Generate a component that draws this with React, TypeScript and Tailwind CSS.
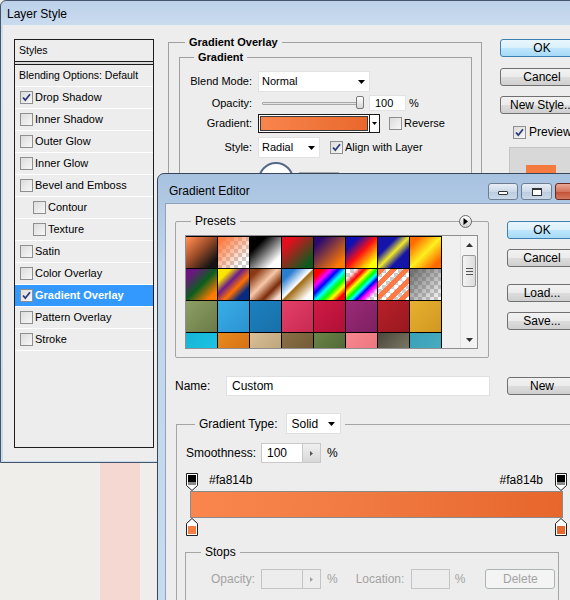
import type { ReactNode } from "react";

type Swatch = { c: string; chk?: boolean };

const SWATCHES: Swatch[] = [
  { c: "bg-[linear-gradient(135deg,#ff8a50_5%,#9a4c28_45%,#141414_85%)]" },
  { c: "bg-[linear-gradient(135deg,#ff7a40_10%,rgba(255,122,64,0)_80%)]", chk: true },
  { c: "bg-[linear-gradient(135deg,#000000_25%,#ffffff_80%)]" },
  { c: "bg-[linear-gradient(135deg,#e0101e_20%,#0e5a1e_85%)]" },
  { c: "bg-[linear-gradient(135deg,#2a0a6e_15%,#ff7a00_85%)]" },
  { c: "bg-[linear-gradient(135deg,#1010b0_20%,#ff1010_50%,#ffff00_85%)]" },
  { c: "bg-[linear-gradient(135deg,#1414a8_30%,#f0e828_50%,#1414a8_70%)]" },
  { c: "bg-[linear-gradient(135deg,#ff6a00_15%,#fff020_50%,#ff6a00_85%)]" },
  { c: "bg-[linear-gradient(135deg,#6c1680_15%,#0a5e1e_50%,#ff7a00_85%)]" },
  { c: "bg-[linear-gradient(135deg,#ffe400_20%,#6a1e8a_40%,#ff7000_60%,#0a2a80_80%)]" },
  { c: "bg-[linear-gradient(135deg,#8a3a14_15%,#f7c8a8_45%,#7a2a08_70%,#f3dccb_90%)]" },
  { c: "bg-[linear-gradient(135deg,#2a7ed0_20%,#ffffff_48%,#a06a10_52%,#ffffff_85%)]" },
  { c: "bg-[linear-gradient(135deg,#ff0000_15%,#ff00ff_28%,#0000ff_40%,#00ffff_52%,#00ff00_64%,#ffff00_76%,#ff0000_88%)]" },
  { c: "bg-[linear-gradient(135deg,transparent_15%,#ff0000_30%,#ffff00_40%,#00ff00_50%,#00ffff_58%,#0000ff_66%,#ff00ff_74%,transparent_88%)]", chk: true },
  { c: "bg-[repeating-linear-gradient(135deg,#ff7a45_0_5px,transparent_5px_9px)]", chk: true },
  { c: "bg-[linear-gradient(135deg,rgba(90,90,90,0.9),rgba(90,90,90,0))]", chk: true },
  { c: "bg-[linear-gradient(135deg,#8da064,#6a7a48)]" },
  { c: "bg-[linear-gradient(135deg,#3aaee6,#2a92d2)]" },
  { c: "bg-[linear-gradient(135deg,#1c80c0,#1870a8)]" },
  { c: "bg-[linear-gradient(135deg,#e4406a,#c82a50)]" },
  { c: "bg-[linear-gradient(135deg,#d01a46,#b01036)]" },
  { c: "bg-[linear-gradient(135deg,#9a2a78,#7e2060)]" },
  { c: "bg-[linear-gradient(135deg,#b82028,#981820)]" },
  { c: "bg-[linear-gradient(135deg,#e8b030,#d09820)]" },
  { c: "bg-[linear-gradient(135deg,#16b4d4,#20c8e8)]" },
  { c: "bg-[linear-gradient(135deg,#e88a20,#d06a10)]" },
  { c: "bg-[linear-gradient(135deg,#d8c098,#b89c70)]" },
  { c: "bg-[linear-gradient(135deg,#8a7048,#6a5430)]" },
  { c: "bg-[linear-gradient(135deg,#6a8448,#4a6030)]" },
  { c: "bg-[linear-gradient(135deg,#f88890,#e87078)]" },
  { c: "bg-[linear-gradient(135deg,#4a483c,#8a8670)]" },
  { c: "bg-[linear-gradient(135deg,#38a0b8,#50b0c0)]" },
];

const STYLES = [
  { label: "Drop Shadow", checked: true },
  { label: "Inner Shadow" },
  { label: "Outer Glow" },
  { label: "Inner Glow" },
  { label: "Bevel and Emboss" },
  { label: "Contour", indent: true },
  { label: "Texture", indent: true },
  { label: "Satin" },
  { label: "Color Overlay" },
  { label: "Gradient Overlay", checked: true, active: true },
  { label: "Pattern Overlay" },
  { label: "Stroke" },
];

const Check = ({ checked = false }: { checked?: boolean }) => (
  <div className="flex h-[13px] w-[13px] shrink-0 items-center justify-center border border-[#8e8f8f] bg-[linear-gradient(135deg,#dcdcdc,#f7f7f7)]">
    {checked && (
      <svg width="11" height="11" viewBox="0 0 11 11">
        <path d="M2 5.5L4.3 8.2L9 2.3" fill="none" stroke="#2c3a78" strokeWidth="1.8" />
      </svg>
    )}
  </div>
);

const Arrow = () => (
  <svg width="7" height="4" viewBox="0 0 7 4">
    <path d="M0 0H7L3.5 4Z" fill="#000" />
  </svg>
);

const Btn = ({ children, def = false, w = "w-[70px]" }: { children: ReactNode; def?: boolean; w?: string }) => (
  <div
    className={`flex h-[18px] items-center justify-center whitespace-nowrap rounded-[3px] border text-[12px] text-black ${w} ${
      def
        ? "border-[#3c7fb1] bg-[linear-gradient(#eaf6fd_0%,#d9f0fc_50%,#bee6fd_51%,#a7d9f5_100%)]"
        : "border-[#707070] bg-[linear-gradient(#f2f2f2_0%,#ebebeb_50%,#dddddd_51%,#cfcfcf_100%)]"
    }`}
  >
    {children}
  </div>
);

const TopStop = () => (
  <svg width="12" height="18" viewBox="0 0 12 18">
    <path d="M0.5 0.5H11.5V12.5L6 17.5L0.5 12.5Z" fill="#fff" stroke="#222" />
    <rect x="2" y="2" width="8" height="7" fill="#000" />
    <rect x="2" y="9" width="8" height="3" fill="#8a8a8a" />
  </svg>
);

const BottomStop = ({ color }: { color: string }) => (
  <svg width="12" height="18" viewBox="0 0 12 18">
    <path d="M6 0.5L11.5 5.5V17.5H0.5V5.5Z" fill="#fff" stroke="#222" />
    <rect x="2" y="8" width="8" height="8" fill={color} />
  </svg>
);

const LayerStyle = () => (
  <div className="absolute left-0 top-0 h-[463px] w-[640px] rounded-t-[6px] border border-[#46566a] bg-[linear-gradient(180deg,#bcd1e9,#d3e2f2_40px,#c8daee)]">
    <div className="flex h-[24px] items-center pl-[6px] pt-[2px] text-[12px] text-black">Layer Style</div>
    <div className="mx-[2px] flex h-[436px] items-start bg-[#ededed] pl-[11px] pt-[14px] text-[10.5px] text-black">
      <div className="h-[409px] w-[140px] shrink-0 border border-[#1e1e1e] bg-[#ededed]">
        <div className="flex h-[22px] items-center border-b border-[#1e1e1e] pl-[4px]">Styles</div>
        <div className="h-[2px] bg-[#dadada]" />
        <div className="flex h-[22px] items-center border-t border-[#1e1e1e] pl-[4px]">Blending Options: Default</div>
        {STYLES.map((s) => (
          <div
            key={s.label}
            className={`flex h-[22px] items-center gap-[2px] border-t border-white ${s.indent ? "pl-[18px]" : "pl-[5px]"} ${
              s.active ? "bg-[#3399ff] font-bold text-white" : ""
            }`}
          >
            <Check checked={s.checked} />
            <span className="text-[11px]">{s.label}</span>
          </div>
        ))}
        <div className="border-t border-white" />
      </div>

      <div className="relative ml-[14px] mt-[3px] h-[300px] w-[314px] shrink-0 border border-[#a0a0a0]">
        <div className="absolute -top-[8px] left-[16px] bg-[#ededed] px-[4px] text-[11px] font-bold leading-[14px]">Gradient Overlay</div>
        <div className="relative ml-[10px] mt-[14px] h-[280px] w-[293px] border border-[#a0a0a0]">
          <div className="absolute -top-[8px] left-[14px] bg-[#ededed] px-[4px] text-[11px] font-bold leading-[14px]">Gradient</div>

          <div className="mt-[13px] flex h-[21px] items-center">
            <div className="w-[72px] text-right text-[11px]">Blend Mode:</div>
            <div className="ml-[6px] flex h-[21px] w-[112px] items-center justify-between border border-[#e2e2e2] bg-white pl-[3px] pr-[4px] text-[11px]">
              <span>Normal</span>
              <Arrow />
            </div>
          </div>

          <div className="mt-[3px] flex h-[16px] items-center">
            <div className="w-[72px] text-right text-[11px]">Opacity:</div>
            <div className="relative ml-[10px] flex h-[16px] w-[102px] items-center">
              <div className="h-[3px] w-[98px] rounded-[1px] border border-[#a8a8a8] bg-[#e4e4e4]" />
              <div className="absolute left-[94px] top-[1px] h-[13px] w-[8px] rounded-[2px] border border-[#7a7a7a] bg-[linear-gradient(#ffffff,#d6d6d6)]" />
            </div>
            <div className="ml-[5px] flex h-[16px] w-[37px] items-center border border-[#e2e2e2] bg-white pl-[5px] text-[11px]">100</div>
            <div className="ml-[3px] text-[11px]">%</div>
          </div>

          <div className="mt-[3px] flex h-[19px] items-center">
            <div className="w-[72px] text-right text-[11px]">Gradient:</div>
            <div className="ml-[6px] flex h-[19px] w-[122px] border border-[#1a1a1a] bg-white">
              <div className="m-px flex-1 border border-[#3a3a3a] bg-[linear-gradient(90deg,#f9854d,#e8682c)]" />
              <div className="flex w-[10px] items-center justify-center border-l border-[#1a1a1a]">
                <svg width="5" height="3" viewBox="0 0 5 3">
                  <path d="M0 0H5L2.5 3Z" fill="#000" />
                </svg>
              </div>
            </div>
            <div className="ml-[9px]">
              <Check />
            </div>
            <div className="ml-[2px] text-[11px]">Reverse</div>
          </div>

          <div className="mt-[4px] flex h-[21px] items-center">
            <div className="w-[72px] text-right text-[11px]">Style:</div>
            <div className="ml-[6px] flex h-[21px] w-[62px] items-center justify-between border border-[#e2e2e2] bg-white pl-[3px] pr-[4px] text-[11px]">
              <span>Radial</span>
              <Arrow />
            </div>
            <div className="ml-[10px]">
              <Check checked />
            </div>
            <div className="ml-[2px] text-[11px]">Align with Layer</div>
          </div>

          <div className="ml-[78px] mt-[4px] flex items-start">
            <div className="h-[36px] w-[36px] rounded-full border-2 border-[#56698a] bg-white" />
            <div className="ml-[5px] mt-[10px] h-[20px] w-[40px] border border-[#aaaaaa] bg-white" />
          </div>
        </div>
      </div>

      <div className="ml-[18px] flex w-[84px] shrink-0 flex-col">
        <Btn def w="w-[84px]">OK</Btn>
        <div className="mt-[11px]">
          <Btn w="w-[84px]">Cancel</Btn>
        </div>
        <div className="mt-[10px]">
          <Btn w="w-[84px]">New Style...</Btn>
        </div>
        <div className="ml-[13px] mt-[9px] flex items-center gap-[3px]">
          <Check checked />
          <span className="whitespace-nowrap text-[12px]">Preview</span>
        </div>
        <div className="ml-[9px] mt-[6px] h-[60px] w-[80px] border border-[#c4c4c4] bg-[#d8d8d8] pl-[16px] pt-[17px]">
          <div className="h-[30px] w-[30px] bg-[#f47a3f]" />
        </div>
      </div>
    </div>
  </div>
);

const GradientEditor = () => (
  <div className="absolute left-[157px] top-[173px] h-[440px] w-[450px] rounded-t-[7px] border border-[#37475b] bg-[linear-gradient(180deg,#a7c2e0,#c2d6ec_90px,#c8dbef)]">
    <div className="flex h-[29px] items-start">
      <div className="pl-[11px] pt-[10px] text-[12px] leading-[14px] text-black">Gradient Editor</div>
      <div className="ml-auto mr-[8px] mt-[9px] flex gap-[3px]">
        <div className="flex h-[17px] w-[30px] items-end justify-center rounded-[3px] border border-[#6d7e93] bg-[linear-gradient(#e8eef6,#ccd9e7_50%,#b9cadd_51%,#cbdaea)] pb-[4px]">
          <div className="h-[4px] w-[10px] rounded-[1px] border border-[#333] bg-white" />
        </div>
        <div className="flex h-[17px] w-[31px] items-center justify-center rounded-[3px] border border-[#6d7e93] bg-[linear-gradient(#e8eef6,#ccd9e7_50%,#b9cadd_51%,#cbdaea)]">
          <div className="h-[8px] w-[10px] border border-t-2 border-[#333] bg-white" />
        </div>
        <div className="flex h-[17px] w-[43px] items-center justify-center rounded-[3px] border border-[#6b2a20] bg-[linear-gradient(#e9a896,#d4745d_50%,#c24e33_51%,#d27a60)]">
          <svg width="10" height="9" viewBox="0 0 10 9">
            <path d="M1 1L9 8M9 1L1 8" stroke="#fff" strokeWidth="2" />
          </svg>
        </div>
      </div>
    </div>

    <div className="ml-[7px] h-[420px] border-l border-t border-[#8ea3bb] bg-[#ededed] text-[12px] text-black">
      <div className="flex items-start">
        <div className="relative ml-[9px] mt-[17px] h-[137px] w-[314px] rounded-[2px] border border-[#a5a5a5]">
          <div className="absolute -top-[9px] left-[15px] bg-[#ededed] px-[4px] leading-[16px]">Presets</div>
          <div className="absolute -top-[7px] right-[16px] flex h-[13px] w-[13px] items-center justify-center rounded-full border border-[#6a6a6a] bg-[linear-gradient(#ffffff,#d0d0d0)]">
            <svg width="5" height="7" viewBox="0 0 5 7">
              <path d="M0.5 0L5 3.5L0.5 7Z" fill="#000" />
            </svg>
          </div>
          <div className="ml-[9px] mt-[13px] flex h-[114px] w-[293px] overflow-hidden border border-[#8f8f8f] bg-[#f0f0f0]">
            <div className="grid h-fit grid-cols-[repeat(8,31px)] gap-px bg-black pr-px pt-px">
              {SWATCHES.map((s, i) => (
                <div
                  key={i}
                  className={`h-[31px] w-[31px] ${s.chk ? "bg-[repeating-conic-gradient(#cccccc_0_25%,#ffffff_0_50%)] bg-[length:8px_8px]" : ""}`}
                >
                  <div className={`h-full w-full ${s.c}`} />
                </div>
              ))}
            </div>
            <div className="flex-1" />
            <div className="flex w-[17px] flex-col border-l border-[#e2e2e2] bg-[#f3f3f3]">
              <div className="flex h-[17px] items-center justify-center">
                <svg width="7" height="4" viewBox="0 0 7 4">
                  <path d="M0 4H7L3.5 0Z" fill="#333" />
                </svg>
              </div>
              <div className="mx-px mt-[2px] flex h-[32px] flex-col items-center justify-center gap-[2px] rounded-[2px] border border-[#9a9a9a] bg-[linear-gradient(90deg,#f4f4f4,#dcdcdc)]">
                <div className="h-px w-[7px] bg-[#555]" />
                <div className="h-px w-[7px] bg-[#555]" />
                <div className="h-px w-[7px] bg-[#555]" />
              </div>
              <div className="flex-1" />
              <div className="flex h-[17px] items-center justify-center">
                <svg width="7" height="4" viewBox="0 0 7 4">
                  <path d="M0 0H7L3.5 4Z" fill="#333" />
                </svg>
              </div>
            </div>
          </div>
        </div>

        <div className="ml-[18px] mt-[17px] flex flex-col">
          <Btn def>OK</Btn>
          <div className="mt-[10px]">
            <Btn>Cancel</Btn>
          </div>
          <div className="mt-[17px]">
            <Btn>Load...</Btn>
          </div>
          <div className="mt-[10px]">
            <Btn>Save...</Btn>
          </div>
        </div>
      </div>

      <div className="mt-[18px] flex h-[20px] items-center">
        <div className="ml-[9px] w-[51px]">Name:</div>
        <div className="flex h-[20px] w-[264px] items-center border border-[#e0e0e0] bg-white pl-[5px]">Custom</div>
        <div className="ml-[17px]">
          <Btn>New</Btn>
        </div>
      </div>

      <div className="relative ml-[10px] mt-[28px] h-[200px] w-[420px] border border-[#a5a5a5]">
        <div className="absolute -top-[12px] left-[18px] flex items-center bg-[#ededed] px-[4px]">
          <span>Gradient Type:</span>
          <div className="ml-[8px] flex h-[21px] w-[55px] items-center justify-between border border-[#e0e0e0] bg-white pl-[5px] pr-[5px]">
            <span>Solid</span>
            <Arrow />
          </div>
        </div>

        <div className="mt-[18px] flex h-[20px] items-center">
          <div className="ml-[9px] w-[70px]">Smoothness:</div>
          <div className="ml-[5px] flex h-[20px] w-[60px] border border-[#c8c8c8] bg-white">
            <div className="flex flex-1 items-center pl-[5px]">100</div>
            <div className="flex w-[18px] items-center justify-center border-l border-[#c8c8c8] bg-[linear-gradient(#f0f0f0,#d8d8d8)]">
              <svg width="3" height="5" viewBox="0 0 3 5">
                <path d="M0 0L3 2.5L0 5Z" fill="#555" />
              </svg>
            </div>
          </div>
          <div className="ml-[6px]">%</div>
        </div>

        <div className="ml-[9px] mt-[10px] w-[381px]">
          <div className="flex h-[18px] items-start">
            <TopStop />
            <span className="ml-[11px] mt-px leading-[12px]">#fa814b</span>
            <span className="ml-auto mr-[12px] mt-px leading-[12px]">#fa814b</span>
            <TopStop />
          </div>
          <div className="mx-[4px] h-[27px] border border-[#8a8a8a] bg-[linear-gradient(90deg,#fa864e,#f07a42_45%,#e7662c)]" />
          <div className="flex h-[18px] justify-between">
            <BottomStop color="#f57d43" />
            <BottomStop color="#e8682c" />
          </div>
        </div>

        <div className="relative ml-[8px] mt-[16px] h-[70px] w-[374px] border border-[#a5a5a5] text-[#a3a3a3]">
          <div className="absolute -top-[9px] left-[15px] bg-[#ededed] px-[4px] leading-[16px] text-black">Stops</div>
          <div className="mt-[16px] flex h-[20px] items-center">
            <div className="ml-[25px] w-[45px]">Opacity:</div>
            <div className="ml-[5px] flex h-[20px] w-[60px] border border-[#c4c4c4] bg-[#ededed]">
              <div className="flex-1" />
              <div className="flex w-[18px] items-center justify-center border-l border-[#c4c4c4]">
                <svg width="3" height="5" viewBox="0 0 3 5">
                  <path d="M0 0L3 2.5L0 5Z" fill="#a0a0a0" />
                </svg>
              </div>
            </div>
            <div className="ml-[6px]">%</div>
            <div className="ml-[18px] w-[55px]">Location:</div>
            <div className="h-[20px] w-[39px] border border-[#c4c4c4] bg-[#ededed]" />
            <div className="ml-[5px]">%</div>
            <div className="ml-[20px] flex h-[20px] w-[70px] items-center justify-center rounded-[3px] border border-[#adb2b5] bg-[#f4f4f4]">Delete</div>
          </div>
        </div>
      </div>
    </div>
  </div>
);

export default function App() {
  return (
    <div className="relative h-[600px] w-[570px] overflow-hidden bg-[#efeeeb] font-['Liberation_Sans',Arial,sans-serif]">
      <div className="absolute left-[100px] top-[463px] h-[137px] w-[40px] bg-[#f6d8d2]" />
      <LayerStyle />
      <GradientEditor />
    </div>
  );
}
